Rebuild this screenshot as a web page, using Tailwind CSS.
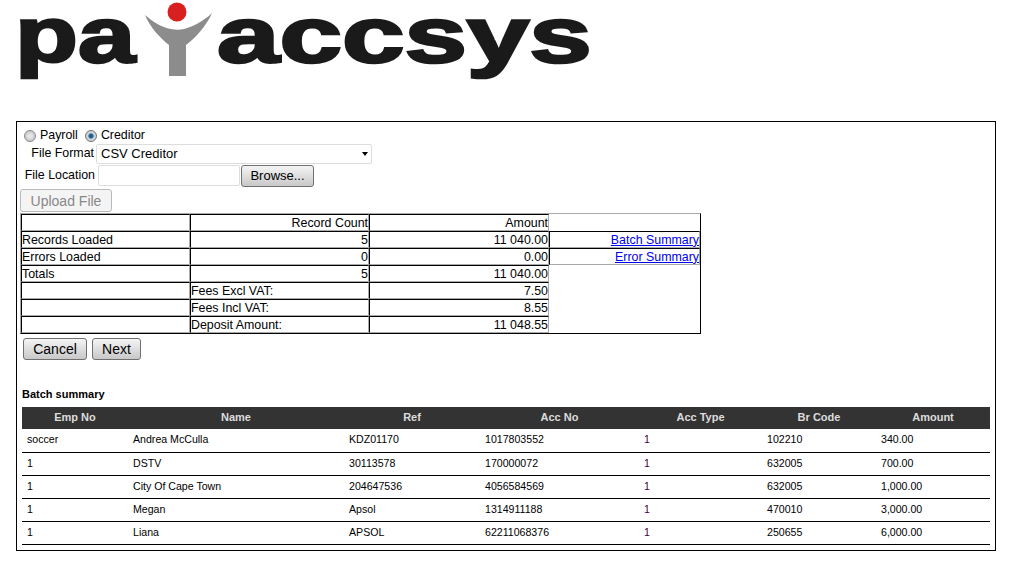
<!DOCTYPE html>
<html lang="en">
<head>
    <meta charset="UTF-8" />
    <title>Payaccsys</title>
    <script src="https://cdn.jsdelivr.net/npm/@tailwindcss/browser@4"></script>
</head>
<body class="bg-white text-black font-['Liberation_Sans',Arial,sans-serif] text-[12.4px]">
    <!-- logo -->
    <div class="h-[121px]">
        <div class="flex items-start pl-[15px] text-[#1a1a1a] font-bold text-[78px] leading-[70px] [-webkit-text-stroke:2.5px_#1a1a1a]">
            <span class="inline-block origin-left scale-x-[1.32] w-[129px]">pa</span>
            <svg width="70" height="78" viewBox="0 0 70 78" class="mt-[1px] shrink-0">
                <circle cx="33" cy="11" r="9.5" fill="#d7201f" />
                <path d="M1 14C10 22 20 27 27 28C31 29 36 29 40 28C48 26 60 20 68 12C62 26 50 38 42 44V75H25V44C16 37 6 26 1 14Z" fill="#8c8c8c" />
            </svg>
            <span class="inline-block origin-left scale-x-[1.44] ml-[3px]">accsys</span>
        </div>
    </div>

    <div class="mx-[16px] w-[980px] h-[430px] border border-black">
        <div class="pl-[7px] pt-[5px] h-[20px] flex items-center gap-1 mt-[1px]">
            <input type="radio" name="kind" class="appearance-none w-[12px] h-[12px] rounded-full border border-[#888] bg-radial from-[#eee] to-[#bbb]" />
            <span class="mr-[3px]">Payroll</span>
            <input type="radio" name="kind" checked class="appearance-none w-[12px] h-[12px] rounded-full border border-[#777] bg-[radial-gradient(circle,#15507f_0,#2a6fa5_30%,#d8d8d8_45%,#bbb_100%)]" />
            <span>Creditor</span>
        </div>
        <div class="flex items-center h-[21px]">
            <span class="w-[77px] text-right">File Format</span>
            <div class="relative ml-[2px] w-[276px] h-[20px] border border-[#ddd] rounded-[2px] text-[13px] pl-[4px] leading-[18px]">
                CSV Creditor
                <span class="absolute right-[3px] top-[7px] w-0 h-0 border-x-[3.5px] border-x-transparent border-t-[4px] border-t-black"></span>
            </div>
        </div>
        <div class="flex items-center h-[23px]">
            <span class="w-[78px] text-right">File Location</span>
            <div class="ml-[3px] w-[142px] h-[21px] border border-[#ddd] rounded-[2px]"></div>
            <button class="ml-[1px] w-[73px] h-[22px] border border-[#707070] rounded-[3px] bg-linear-to-b from-[#f5f5f5] to-[#c8c8c8] text-[13px] leading-none">Browse...</button>
        </div>
        <button class="block ml-[3px] mt-[2px] w-[92px] h-[23px] border border-[#bbb] rounded-[3px] bg-[#f4f4f4] text-[#888] text-[14px] leading-none">Upload File</button>

        <table class="ml-[3px] mt-[1px] w-[681px] table-fixed border-separate border-spacing-0 border border-t-[#aaa] border-l-[#aaa] border-r-black border-b-black leading-[14px]">
            <colgroup><col class="w-[169px]" /><col class="w-[179px]" /><col class="w-[180px]" /><col /></colgroup>
            <tbody>
                <tr class="h-[17px]">
                    <td class="border border-t-black border-l-black border-r-[#aaa] border-b-[#aaa]"></td>
                    <td class="border border-t-black border-l-black border-r-[#aaa] border-b-[#aaa] text-right">Record Count</td>
                    <td class="border border-t-black border-l-black border-r-[#aaa] border-b-[#aaa] text-right">Amount</td>
                    <td></td>
                </tr>
                <tr class="h-[17px]">
                    <td class="border border-t-black border-l-black border-r-[#aaa] border-b-[#aaa]">Records Loaded</td>
                    <td class="border border-t-black border-l-black border-r-[#aaa] border-b-[#aaa] text-right">5</td>
                    <td class="border border-t-black border-l-black border-r-[#aaa] border-b-[#aaa] text-right">11 040.00</td>
                    <td class="border border-t-black border-l-black border-r-[#aaa] border-b-[#aaa] text-right"><a href="#" class="text-[#0000ee] underline">Batch Summary</a></td>
                </tr>
                <tr class="h-[17px]">
                    <td class="border border-t-black border-l-black border-r-[#aaa] border-b-[#aaa]">Errors Loaded</td>
                    <td class="border border-t-black border-l-black border-r-[#aaa] border-b-[#aaa] text-right">0</td>
                    <td class="border border-t-black border-l-black border-r-[#aaa] border-b-[#aaa] text-right">0.00</td>
                    <td class="border border-t-black border-l-black border-r-[#aaa] border-b-[#aaa] text-right"><a href="#" class="text-[#0000ee] underline">Error Summary</a></td>
                </tr>
                <tr class="h-[17px]">
                    <td class="border border-t-black border-l-black border-r-[#aaa] border-b-[#aaa]">Totals</td>
                    <td class="border border-t-black border-l-black border-r-[#aaa] border-b-[#aaa] text-right">5</td>
                    <td class="border border-t-black border-l-black border-r-[#aaa] border-b-[#aaa] text-right">11 040.00</td>
                    <td rowspan="4"></td>
                </tr>
                <tr class="h-[17px]">
                    <td class="border border-t-black border-l-black border-r-[#aaa] border-b-[#aaa]"></td>
                    <td class="border border-t-black border-l-black border-r-[#aaa] border-b-[#aaa]">Fees Excl VAT:</td>
                    <td class="border border-t-black border-l-black border-r-[#aaa] border-b-[#aaa] text-right">7.50</td>
                </tr>
                <tr class="h-[17px]">
                    <td class="border border-t-black border-l-black border-r-[#aaa] border-b-[#aaa]"></td>
                    <td class="border border-t-black border-l-black border-r-[#aaa] border-b-[#aaa]">Fees Incl VAT:</td>
                    <td class="border border-t-black border-l-black border-r-[#aaa] border-b-[#aaa] text-right">8.55</td>
                </tr>
                <tr class="h-[17px]">
                    <td class="border border-t-black border-l-black border-r-[#aaa] border-b-[#aaa]"></td>
                    <td class="border border-t-black border-l-black border-r-[#aaa] border-b-[#aaa]">Deposit Amount:</td>
                    <td class="border border-t-black border-l-black border-r-[#aaa] border-b-[#aaa] text-right">11 048.55</td>
                </tr>
            </tbody>
        </table>

        <div class="flex gap-[5px] ml-[6px] mt-[4px] text-[14px]">
            <button class="w-[64px] h-[22px] border border-[#707070] rounded-[3px] bg-linear-to-b from-[#f5f5f5] to-[#c8c8c8] leading-none">Cancel</button>
            <button class="w-[49px] h-[22px] border border-[#707070] rounded-[3px] bg-linear-to-b from-[#f5f5f5] to-[#c8c8c8] leading-none">Next</button>
        </div>

        <div class="ml-[5px] mt-[28px] text-[11px] font-bold leading-[13px]">Batch summary</div>

        <table class="ml-[5px] mt-[6px] w-[968px] table-fixed border-collapse text-[10.6px]">
            <colgroup><col class="w-[106px]" /><col class="w-[216px]" /><col class="w-[136px]" /><col class="w-[159px]" /><col class="w-[123px]" /><col class="w-[114px]" /><col /></colgroup>
            <thead>
                <tr class="h-[22px] bg-[#333] text-[#ddd] text-[11px]">
                    <th class="font-bold pb-[2px]">Emp No</th>
                    <th class="font-bold pb-[2px]">Name</th>
                    <th class="font-bold pb-[2px]">Ref</th>
                    <th class="font-bold pb-[2px]">Acc No</th>
                    <th class="font-bold pb-[2px]">Acc Type</th>
                    <th class="font-bold pb-[2px]">Br Code</th>
                    <th class="font-bold pb-[2px]">Amount</th>
                </tr>
            </thead>
            <tbody>
                <tr class="h-[23px] border-b border-black">
                    <td class="pl-[5px]">soccer</td><td class="pl-[5px]">Andrea McCulla</td><td class="pl-[5px]">KDZ01170</td><td class="pl-[5px]">1017803552</td><td class="pl-[5px] text-[#400040]">1</td><td class="pl-[5px]">102210</td><td class="pl-[5px]">340.00</td>
                </tr>
                <tr class="h-[23px] border-b border-black">
                    <td class="pl-[5px]">1</td><td class="pl-[5px]">DSTV</td><td class="pl-[5px]">30113578</td><td class="pl-[5px]">170000072</td><td class="pl-[5px] text-[#400040]">1</td><td class="pl-[5px]">632005</td><td class="pl-[5px]">700.00</td>
                </tr>
                <tr class="h-[23px] border-b border-black">
                    <td class="pl-[5px]">1</td><td class="pl-[5px]">City Of Cape Town</td><td class="pl-[5px]">204647536</td><td class="pl-[5px]">4056584569</td><td class="pl-[5px] text-[#400040]">1</td><td class="pl-[5px]">632005</td><td class="pl-[5px]">1,000.00</td>
                </tr>
                <tr class="h-[23px] border-b border-black">
                    <td class="pl-[5px]">1</td><td class="pl-[5px]">Megan</td><td class="pl-[5px]">Apsol</td><td class="pl-[5px]">1314911188</td><td class="pl-[5px] text-[#400040]">1</td><td class="pl-[5px]">470010</td><td class="pl-[5px]">3,000.00</td>
                </tr>
                <tr class="h-[23px] border-b border-black">
                    <td class="pl-[5px]">1</td><td class="pl-[5px]">Liana</td><td class="pl-[5px]">APSOL</td><td class="pl-[5px]">62211068376</td><td class="pl-[5px] text-[#400040]">1</td><td class="pl-[5px]">250655</td><td class="pl-[5px]">6,000.00</td>
                </tr>
            </tbody>
        </table>
    </div>
</body>
</html>
